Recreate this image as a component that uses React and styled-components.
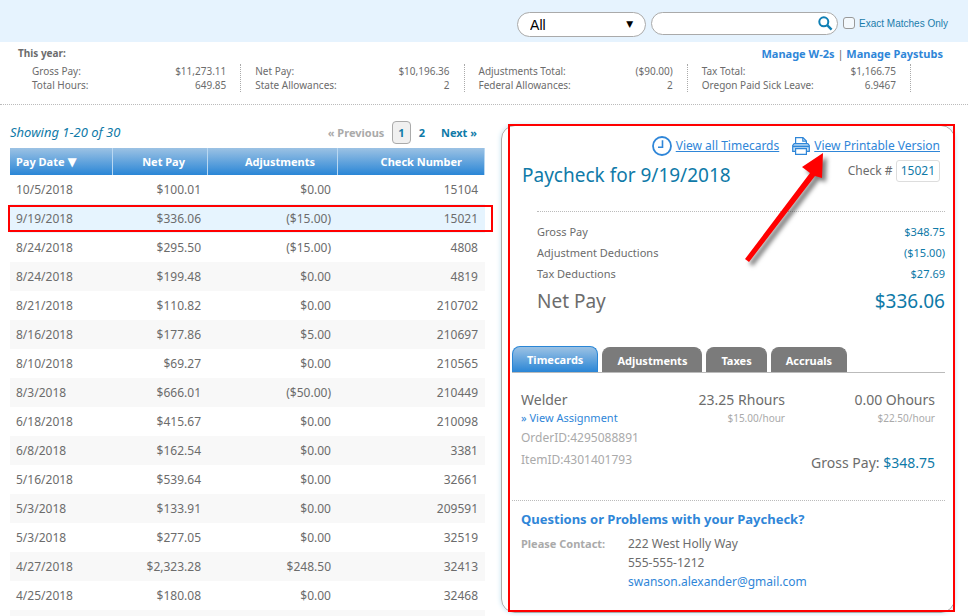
import React, { useState } from "react";
import styled, { createGlobalStyle, css } from "styled-components";

const totals = [
  [["Gross Pay:", "$11,273.11"], ["Total Hours:", "649.85"]],
  [["Net Pay:", "$10,196.36"], ["State Allowances:", "2"]],
  [["Adjustments Total:", "($90.00)"], ["Federal Allowances:", "2"]],
  [["Tax Total:", "$1,166.75"], ["Oregon Paid Sick Leave:", "6.9467"]],
];

const paychecks = [
  ["10/5/2018", "$100.01", "$0.00", "15104"],
  ["9/19/2018", "$336.06", "($15.00)", "15021"],
  ["8/24/2018", "$295.50", "($15.00)", "4808"],
  ["8/24/2018", "$199.48", "$0.00", "4819"],
  ["8/21/2018", "$110.82", "$0.00", "210702"],
  ["8/16/2018", "$177.86", "$5.00", "210697"],
  ["8/10/2018", "$69.27", "$0.00", "210565"],
  ["8/3/2018", "$666.01", "($50.00)", "210449"],
  ["6/18/2018", "$415.67", "$0.00", "210098"],
  ["6/8/2018", "$162.54", "$0.00", "3381"],
  ["5/16/2018", "$539.64", "$0.00", "32661"],
  ["5/3/2018", "$133.91", "$0.00", "209591"],
  ["5/3/2018", "$277.05", "$0.00", "32519"],
  ["4/27/2018", "$2,323.28", "$248.50", "32413"],
  ["4/25/2018", "$180.08", "$0.00", "32468"],
];

const deductions = [
  ["Gross Pay", "$348.75"],
  ["Adjustment Deductions", "($15.00)"],
  ["Tax Deductions", "$27.69"],
];

const tabs = ["Timecards", "Adjustments", "Taxes", "Accruals"];

const SearchIcon = () => (
  <svg width='15' height='15' viewBox='0 0 15 15' fill='none' stroke='#0f7fb5'>
    <circle cx='5.8' cy='5.8' r='4.5' strokeWidth='2' />
    <path d='M9.2 9.2L13.6 13.6' strokeWidth='2.4' />
  </svg>
);

const ClockIcon = () => (
  <svg width='20' height='20' viewBox='0 0 20 20' fill='none' stroke='#2f86d8'>
    <circle cx='10' cy='10' r='9' strokeWidth='1.8' />
    <path d='M10.5 4.2V11.2H6' strokeWidth='1.6' />
  </svg>
);

const PrinterIcon = () => (
  <svg width='18' height='18' viewBox='0 0 18 18' fill='none' stroke='#2f86d8' strokeWidth='1.2'>
    <path d='M3.6 7V0.7H11L14.4 4V7' fill='#fff' />
    <path d='M10.8 1V4.2H14' />
    <path d='M2.2 6.6H15.8L17.3 8.4V14.3H0.7V8.4Z' fill='#c3dff6' />
    <path d='M1 9.4H17' strokeWidth='1.6' />
    <path d='M3.6 11.6H14.4V17.3H3.6Z' fill='#fff' />
  </svg>
);

const App = () => {
  const [selected, setSelected] = useState("15021");
  const [tab, setTab] = useState("Timecards");
  const [query, setQuery] = useState("");

  return (
    <>
      <GlobalStyle />
      <TopBar>
        <SelectWrap>
          <select aria-label='Search in' defaultValue='All'>
            <option>All</option>
          </select>
          <span aria-hidden='true'>▼</span>
        </SelectWrap>
        <SearchBox>
          <input
            type='text'
            aria-label='Search'
            value={query}
            onChange={(event) => setQuery(event.target.value)}
          />
          <button type='button' aria-label='Search'>
            <SearchIcon />
          </button>
        </SearchBox>
        <ExactLabel>
          <input type='checkbox' />
          Exact Matches Only
        </ExactLabel>
      </TopBar>

      <Summary>
        <SummaryHead>
          <h2>This year:</h2>
          <nav>
            <a href='#w2'>Manage W-2s</a> | <a href='#paystubs'>Manage Paystubs</a>
          </nav>
        </SummaryHead>
        <Totals>
          {totals.map((group) => (
            <TotalGroup key={group[0][0]}>
              {group.map(([label, value]) => (
                <div key={label}>
                  <dt>{label}</dt>
                  <dd>{value}</dd>
                </div>
              ))}
            </TotalGroup>
          ))}
        </Totals>
      </Summary>

      <Main>
        <ListPane>
          <ListHead>
            <em>Showing 1-20 of 30</em>
            <Pager>
              <button type='button' disabled>
                « Previous
              </button>
              <button type='button' aria-current='page'>
                1
              </button>
              <button type='button'>2</button>
              <button type='button'>Next »</button>
            </Pager>
          </ListHead>
          <PayTable>
            <colgroup>
              <col width='103' />
              <col width='95' />
              <col width='130' />
              <col width='147' />
            </colgroup>
            <thead>
              <tr>
                <th>
                  Pay Date <SortMark>▼</SortMark>
                </th>
                <th>Net Pay</th>
                <th>Adjustments</th>
                <th>Check Number</th>
              </tr>
            </thead>
            <tbody>
              {paychecks.map((row) => (
                <PayRow
                  key={row[3]}
                  $selected={row[3] === selected}
                  onClick={() => setSelected(row[3])}
                >
                  {row.map((cell, index) => (
                    <td key={index}>{cell}</td>
                  ))}
                </PayRow>
              ))}
            </tbody>
          </PayTable>
          <NextRow />
          <RowHighlight />
        </ListPane>

        <Detail>
          <Actions>
            <a href='#timecards'>
              <ClockIcon />
              <span>View all Timecards</span>
            </a>
            <a href='#print'>
              <PrinterIcon />
              <span>View Printable Version</span>
            </a>
          </Actions>
          <TitleRow>
            <h1>Paycheck for 9/19/2018</h1>
            <p>
              Check # <b>15021</b>
            </p>
          </TitleRow>
          <Breakdown>
            {deductions.map(([label, value]) => (
              <Line key={label}>
                <dt>{label}</dt>
                <dd>{value}</dd>
              </Line>
            ))}
            <Line $net>
              <dt>Net Pay</dt>
              <dd>$336.06</dd>
            </Line>
          </Breakdown>

          <TabList role='tablist'>
            {tabs.map((name) => (
              <Tab
                key={name}
                type='button'
                role='tab'
                aria-selected={name === tab}
                $active={name === tab}
                onClick={() => setTab(name)}
              >
                {name}
              </Tab>
            ))}
          </TabList>
          <Timecard>
            <Job>
              <h3>Welder</h3>
              <a href='#assignment'>» View Assignment</a>
              <p>OrderID:4295088891</p>
              <p>ItemID:4301401793</p>
            </Job>
            <Rates>
              <Rate>
                <span>23.25 Rhours</span>
                <small>$15.00/hour</small>
              </Rate>
              <Rate>
                <span>0.00 Ohours</span>
                <small>$22.50/hour</small>
              </Rate>
              <Gross>
                Gross Pay: <b>$348.75</b>
              </Gross>
            </Rates>
          </Timecard>

          <Contact>
            <h2>Questions or Problems with your Paycheck?</h2>
            <div>
              <strong>Please Contact:</strong>
              <address>
                222 West Holly Way
                <br />
                555-555-1212
                <br />
                <a href='mailto:swanson.alexander@gmail.com'>swanson.alexander@gmail.com</a>
              </address>
            </div>
          </Contact>
          <Highlight />
          <Arrow width='100' height='130' viewBox='0 0 100 130' aria-hidden='true'>
            <path d='M8 115L73 29L65 23L86 9L85 34L78 32L12 118Z' />
          </Arrow>
        </Detail>
      </Main>
    </>
  );
};

const GlobalStyle = createGlobalStyle`
  * {
    box-sizing: border-box;
  }
  body {
    margin: 0;
    background: #fff;
    color: #6c6c6c;
    font-family: "Noto Sans", "Open Sans", sans-serif;
    font-size: 11px;
    overflow-x: hidden;
  }
  h1, h2, h3, p, dl, dd {
    margin: 0;
  }
  a {
    color: #2f86d8;
    text-decoration: none;
  }
  button, input, select {
    font-family: inherit;
  }
  button {
    cursor: pointer;
  }
`;

const TopBar = styled.header`
  display: flex;
  align-items: flex-start;
  justify-content: flex-end;
  gap: 5px;
  height: 42px;
  padding: 12px 20px 0 0;
  background: #e6f3fe;
`;

const SelectWrap = styled.div`
  position: relative;

  select {
    display: block;
    width: 129px;
    height: 25px;
    padding: 0 12px;
    appearance: none;
    border: 1px solid #aaa;
    border-radius: 13px;
    background: #fff;
    color: #000;
    font: 14px "Liberation Sans", sans-serif;
  }
  span {
    position: absolute;
    top: 6px;
    right: 13px;
    color: #000;
    font: 9px/12px "DejaVu Sans", sans-serif;
    pointer-events: none;
  }
`;

const SearchBox = styled.div`
  display: flex;
  align-items: center;
  width: 187px;
  height: 23px;
  padding: 0 4px 0 12px;
  border: 1px solid #aaa;
  border-radius: 12px;
  background: #fff;

  input {
    flex: 1;
    min-width: 0;
    border: none;
    outline: none;
    background: none;
  }
  button {
    display: flex;
    padding: 0;
    border: none;
    background: none;
  }
`;

const ExactLabel = styled.label`
  display: flex;
  align-items: center;
  gap: 4px;
  height: 22px;
  color: #1b7cab;
  font: 10px "Liberation Sans", sans-serif;

  input {
    width: 12px;
    height: 12px;
    margin: 0;
    appearance: none;
    border: 1px solid #999;
    border-radius: 3px;
    background: #f4f9fd;
  }
`;

const Summary = styled.section`
  padding: 0 25px 12px 18px;
  border-bottom: 1px dotted #bbb;
`;

const SummaryHead = styled.div`
  display: flex;
  align-items: center;
  justify-content: space-between;
  height: 22px;

  h2 {
    font-size: 10px;
  }
  nav {
    font-size: 11px;
  }
  a {
    font-weight: bold;
  }
`;

const Totals = styled.div`
  display: grid;
  grid-template-columns: repeat(4, 1fr);
  margin-right: 32px;
`;

const TotalGroup = styled.dl`
  padding: 0 14px;
  border-right: 1px dotted #aaa;
  font-size: 10px;
  line-height: 14px;

  div {
    display: flex;
    justify-content: space-between;
  }
`;

const Main = styled.main`
  display: grid;
  grid-template-columns: minmax(0, 475fr) minmax(0, 454fr);
  align-items: start;
  gap: 16px;
  padding: 14px 13px 0 10px;
`;

const ListPane = styled.section`
  position: relative;
  font-size: 12px;
`;

const ListHead = styled.div`
  display: flex;
  align-items: center;
  justify-content: space-between;
  height: 29px;
  padding-bottom: 3px;

  em {
    color: #0f7aa8;
    font-size: 13px;
  }
`;

const Pager = styled.nav`
  display: flex;
  align-items: center;

  button {
    padding: 0 7px;
    border: 1px solid transparent;
    background: none;
    color: #0f7aa8;
    font-size: 11px;
    font-weight: bold;
    line-height: 21px;
  }
  button:disabled {
    color: #aaa;
  }
  button[aria-current] {
    padding: 0 5px;
    border-color: #aaa;
    border-radius: 4px;
    background: #f0f0f0;
  }
`;

const PayTable = styled.table`
  width: 100%;
  table-layout: fixed;
  border-collapse: separate;
  border-spacing: 0;
  text-align: right;

  th {
    height: 27px;
    padding: 0 22px;
    border-right: 1px solid #b9d8f2;
    background: linear-gradient(#9cc2e4, #2a86d6);
    color: #fff;
    font-size: 11px;
  }
  td {
    height: 29px;
    padding: 0 7px;
  }
  th:first-child, td:first-child {
    padding: 0 6px;
    text-align: left;
  }
`;

const SortMark = styled.span`
  font: 12px/12px "DejaVu Sans", sans-serif;
`;

const PayRow = styled.tr`
  cursor: pointer;

  &:nth-child(even) {
    background: #f8f8f8;
  }
  ${({ $selected }) =>
    $selected &&
    css`
      && {
        background: #e6f4fe;
      }
    `}
`;

const NextRow = styled.div`
  height: 6px;
  background: #f8f8f8;
`;

const RowHighlight = styled.div`
  position: absolute;
  top: 86px;
  left: -2px;
  right: -8px;
  height: 27px;
  border: 2px solid #f00;
  pointer-events: none;
`;

const Detail = styled.section`
  position: relative;
  margin-top: 6px;
  padding: 9px 9px 21px 10px;
  border: 1px solid #aaa;
  border-radius: 14px;
  box-shadow: 0 0 5px #bfe0f0;
`;

const Actions = styled.div`
  display: flex;
  justify-content: flex-end;
  gap: 13px;
  padding-right: 5px;

  a {
    display: flex;
    align-items: center;
    gap: 4px;
    height: 21px;
    font-size: 12px;
  }
  span {
    text-decoration: underline;
  }
`;

const TitleRow = styled.div`
  display: flex;
  justify-content: space-between;
  height: 56px;
  margin-left: 25px;
  padding-right: 5px;
  border-bottom: 1px dotted #bbb;

  h1 {
    margin-left: -15px;
    color: #0f7aa8;
    font-size: 19px;
    font-weight: normal;
    line-height: 38px;
  }
  p {
    padding-top: 4px;
    font-size: 12px;
    line-height: 20px;
  }
  b {
    display: inline-block;
    padding: 0 4px;
    border: 1px solid #ddd;
    border-radius: 3px;
    color: #0f7aa8;
    font-weight: normal;
  }
`;

const Breakdown = styled.dl`
  padding: 9px 0 28px 25px;
`;

const Line = styled.div`
  display: flex;
  justify-content: space-between;
  font-size: ${({ $net }) => ($net ? "19px" : "11px")};
  line-height: ${({ $net }) => ($net ? "34px" : "21px")};

  dd {
    color: #0f7aa8;
  }
`;

const TabList = styled.div`
  display: flex;
  align-items: flex-end;
  gap: 4px;
  border-bottom: 1px solid #bbb;
`;

const Tab = styled.button`
  height: ${({ $active }) => ($active ? "26px" : "25px")};
  padding: 0 14px;
  border: 1px solid ${({ $active }) => ($active ? "#2a86d6" : "#7b7b7b")};
  border-bottom: none;
  border-radius: 8px 8px 0 0;
  background: ${({ $active }) => ($active ? "linear-gradient(#9cc2e4, #2a86d6)" : "#7b7b7b")};
  color: #fff;
  font-size: 11px;
  font-weight: bold;
`;

const Timecard = styled.div`
  display: flex;
  justify-content: space-between;
  height: 128px;
  padding: 16px 10px 0 9px;
  border-bottom: 1px dotted #bbb;
`;

const Job = styled.div`
  color: #aaa;

  h3 {
    color: #6c6c6c;
    font-size: 14px;
    font-weight: normal;
    line-height: 22px;
  }
  a {
    display: block;
    line-height: 14px;
  }
  p {
    padding-top: 4px;
    font-size: 12px;
    line-height: 18px;
  }
`;

const Rates = styled.div`
  display: grid;
  grid-template-columns: auto 150px;
  align-content: start;
  text-align: right;
`;

const Rate = styled.div`
  span {
    display: block;
    font-size: 14px;
    line-height: 22px;
  }
  small {
    display: block;
    color: #aaa;
    font-size: 10px;
    line-height: 14px;
  }
`;

const Gross = styled.p`
  grid-column: 1 / -1;
  padding-top: 27px;
  font-size: 14px;
  line-height: 22px;

  b {
    color: #0f7aa8;
    font-weight: normal;
  }
`;

const Contact = styled.div`
  padding: 8px 9px 0;

  h2 {
    color: #2f86d8;
    font-size: 13px;
    line-height: 20px;
  }
  div {
    display: flex;
    padding-top: 5px;
  }
  strong {
    width: 107px;
    color: #aaa;
    font-size: 11px;
    line-height: 19px;
  }
  address {
    font-size: 12px;
    font-style: normal;
    line-height: 19px;
  }
`;

const Highlight = styled.div`
  position: absolute;
  inset: -2px -1px 0 6px;
  border: 2px solid #f00;
  pointer-events: none;
`;

const Arrow = styled.svg`
  position: absolute;
  top: 18px;
  right: 117px;
  fill: #f00;
  filter: drop-shadow(4px 4px 2px rgba(0, 0, 0, 0.5));
  pointer-events: none;
`;

export default App;
